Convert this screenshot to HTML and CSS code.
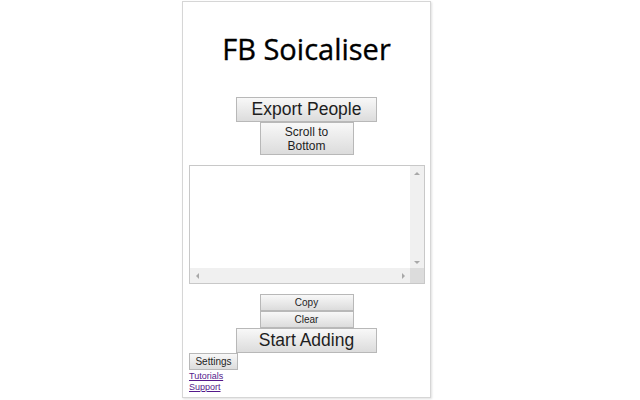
FILE: index.html
```html
<!DOCTYPE html>
<html>
<head>
<meta charset="utf-8">
<link rel="stylesheet" href="styles.css">
</head>
<body>
<div class="panel">
  <h1 class="title">FB Soicaliser</h1>
  <div class="stack">
    <button class="btn btn-big">Export People</button>
    <button class="btn btn-scroll">Scroll to Bottom</button>
    <div class="textbox">
      <textarea class="output"></textarea>
      <div class="vbar"><span class="arrow arrow-up"></span><span class="arrow arrow-down"></span></div>
      <div class="hbar"><span class="arrow arrow-left"></span><span class="arrow arrow-right"></span></div>
      <div class="corner"></div>
    </div>
    <button class="btn btn-small">Copy</button>
    <button class="btn btn-small">Clear</button>
    <button class="btn btn-big">Start Adding</button>
    <button class="btn btn-settings">Settings</button>
  </div>
  <div class="links">
    <a href="#" class="link">Tutorials</a>
    <a href="#" class="link">Support</a>
  </div>
</div>
</body>
</html>
```

FILE: styles.css
```css
html, body {
  margin: 0;
  padding: 0;
  background: #ffffff;
}
body {
  width: 640px;
  height: 400px;
  overflow: hidden;
}
.panel {
  box-sizing: border-box;
  margin: 1px 0 0 182px;
  width: 249px;
  height: 397px;
  border: 1px solid #d6d6d6;
  box-shadow: 1px 1px 2px rgba(0, 0, 0, 0.12);
  padding: 0 6px;
  font-family: "Liberation Sans", Arial, sans-serif;
}
.title {
  margin: 27px 0 0;
  font-family: "Open Sans", sans-serif;
  font-weight: 400;
  font-size: 29px;
  line-height: 40px;
  text-align: center;
  color: #000;
  -webkit-text-stroke: 0.35px #000;
}
.stack {
  display: flex;
  flex-direction: column;
  align-items: center;
  margin-top: 28px;
}
.btn {
  box-sizing: border-box;
  margin: 0;
  padding: 0;
  border: 1px solid #b8b8b8;
  border-radius: 0;
  background: linear-gradient(#f8f8f8, #dcdcdc);
  color: #1e1e1e;
  font-family: "Liberation Sans", Arial, sans-serif;
}
.btn-big {
  width: 141px;
  height: 25px;
  font-size: 17.5px;
}
.btn-scroll {
  width: 94px;
  height: 33px;
  font-size: 12px;
  line-height: 14px;
  padding: 0 20px;
}
.btn-small {
  width: 94px;
  height: 17px;
  font-size: 10px;
}
.btn-settings {
  align-self: flex-start;
  width: 49px;
  height: 17px;
  font-size: 10px;
}
.textbox {
  box-sizing: border-box;
  margin: 10px 0;
  width: 236px;
  height: 119px;
  border: 1px solid #c8c8c8;
  display: grid;
  grid-template-columns: 1fr 14px;
  grid-template-rows: 1fr 15px;
  background: #fff;
}
.output {
  display: block;
  margin: 0;
  padding: 0;
  border: 0;
  resize: none;
  overflow: hidden;
  width: 100%;
  height: 100%;
  box-sizing: border-box;
  background: #fff;
  outline: none;
}
.vbar {
  background: #f0f0f0;
  display: flex;
  flex-direction: column;
  justify-content: space-between;
  align-items: center;
  padding: 6px 0 4px;
}
.hbar {
  background: #f0f0f0;
  display: flex;
  justify-content: space-between;
  align-items: center;
  padding: 0 5px 0 6px;
}
.corner {
  background: #dcdcdc;
}
.arrow {
  display: block;
  width: 0;
  height: 0;
}
.arrow-up {
  border-left: 3px solid transparent;
  border-right: 3px solid transparent;
  border-bottom: 3px solid #a8a8a8;
}
.arrow-down {
  border-left: 3px solid transparent;
  border-right: 3px solid transparent;
  border-top: 3px solid #a8a8a8;
}
.arrow-left {
  border-top: 3px solid transparent;
  border-bottom: 3px solid transparent;
  border-right: 3px solid #a8a8a8;
}
.arrow-right {
  border-top: 3px solid transparent;
  border-bottom: 3px solid transparent;
  border-left: 3px solid #a8a8a8;
}
.links {
  display: flex;
  flex-direction: column;
  align-items: flex-start;
  margin-top: 1px;
}
.link {
  font-size: 9px;
  line-height: 10.5px;
  color: #551a8b;
}
```
